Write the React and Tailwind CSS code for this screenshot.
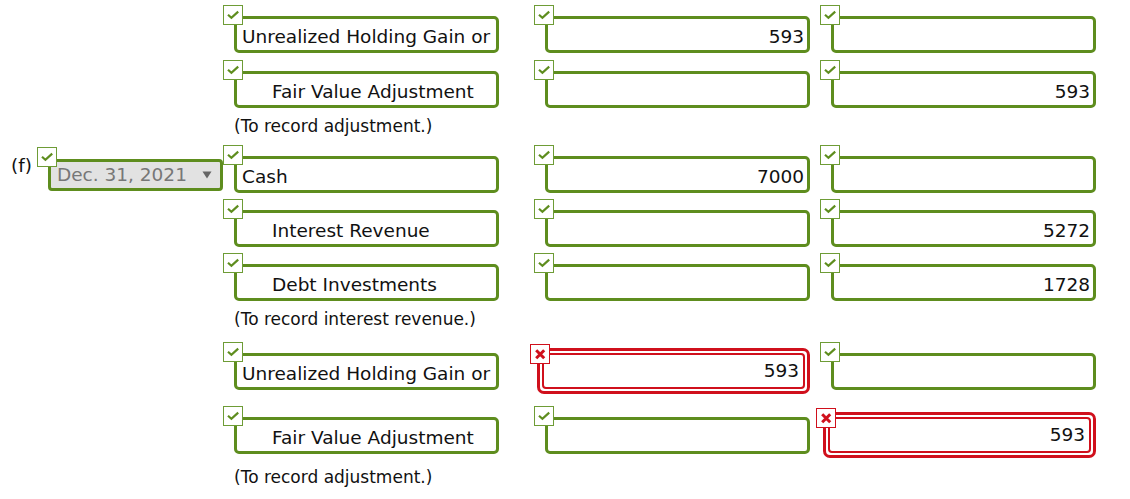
import React from "react";

// small status badges that sit on the top-left corner of each field
const Check = ({ pos = "-left-[11px] -top-[11px]" }) => (
  <span
    className={`absolute ${pos} z-10 flex h-[20px] w-[20px] items-center justify-center border border-[#6e9c36] bg-white`}
  >
    <svg width="18" height="18" viewBox="0 0 18 18">
      <path d="M4 8.8 L7.4 11.8 L14.2 5.6" fill="none" stroke="#5e8d1e" strokeWidth="2.2" />
    </svg>
  </span>
);

const Cross = () => (
  <span className="absolute -left-[7px] -top-[4px] z-10 flex h-[20px] w-[20px] items-center justify-center border border-[#d0101c] bg-white">
    <svg width="18" height="18" viewBox="0 0 18 18">
      <path d="M5.2 5.2 L13.2 13.2 M13.2 5.2 L5.2 13.2" fill="none" stroke="#d0101c" strokeWidth="3" />
    </svg>
  </span>
);

const Box = ({ children, indent = false, number = false }) => (
  <div className="relative h-[37px] w-[265px] shrink-0">
    <Check />
    <div
      className={`flex h-full items-center overflow-hidden whitespace-nowrap rounded-[5px] border-[3px] border-[#5e8d1e] bg-white pt-[5px] leading-[24px] ${
        number ? "justify-end pr-[3px]" : indent ? "pl-[35px]" : "pl-[5px]"
      }`}
    >
      {children}
    </div>
  </div>
);

const WrongBox = ({ children }) => (
  <div className="relative h-[46px] w-[273px] shrink-0">
    <Cross />
    <div className="h-full rounded-[7px] border-[3px] border-[#d0101c] bg-white p-[2px]">
      <div className="flex h-full items-center justify-end rounded-[4px] border-[2px] border-[#d0101c] pr-[4px] leading-[24px]">
        {children}
      </div>
    </div>
  </div>
);

const Row = ({ left, account, indent, debit, credit, badDebit, badCredit, className = "" }) => (
  <div className={`flex items-center ${className}`}>
    <div className="h-[37px] w-[234px] shrink-0">{left}</div>
    <Box indent={indent}>{account}</Box>
    <div className="flex w-[311px] shrink-0 justify-end">
      {badDebit ? <WrongBox>{debit}</WrongBox> : <Box number>{debit}</Box>}
    </div>
    <div className="flex w-[286px] shrink-0 justify-end">
      {badCredit ? <WrongBox>{credit}</WrongBox> : <Box number>{credit}</Box>}
    </div>
  </div>
);

const Note = ({ children, className = "" }) => (
  <div className={`pl-[234px] text-[17px] leading-[24px] ${className}`}>{children}</div>
);

const DatePick = () => (
  <div className="flex h-full items-start">
    <span className="ml-[11px] -mt-[2px] leading-[24px]">(f)</span>
    <div className="relative ml-[16px] mt-[3px] h-[32px] w-[175px]">
      <Check pos="-left-[11px] -top-[12px]" />
      <div className="flex h-full items-center justify-between rounded-[4px] border-[3px] border-[#5e8d1e] bg-[#e2e2e2] pl-[6px] pr-[8px] leading-[24px] text-[#777]">
        <span>Dec. 31, 2021</span>
        <svg width="10" height="8" viewBox="0 0 10 8">
          <path d="M0.5 0.5 L9.5 0.5 L5 7.5 Z" fill="#666" />
        </svg>
      </div>
    </div>
  </div>
);

export default function App() {
  const acct = "Unrealized Holding Gain or";

  return (
    <div className="min-h-screen w-[1130px] bg-white pt-[16px] font-['DejaVu_Sans',sans-serif] text-[18.5px] text-[#111]">
      <Row account={acct} debit="593" credit="" />
      <Row account="Fair Value Adjustment" indent debit="" credit="593" className="mt-[18px]" />
      <Note className="mt-[6px]">(To record adjustment.)</Note>

      <Row left={<DatePick />} account="Cash" debit="7000" credit="" className="mt-[18px]" />
      <Row account="Interest Revenue" indent debit="" credit="5272" className="mt-[17px]" />
      <Row account="Debt Investments" indent debit="" credit="1728" className="mt-[17px]" />
      <Note className="mt-[6px]">(To record interest revenue.)</Note>

      <Row account={acct} debit="593" credit="" badDebit className="mt-[17px]" />
      <Row account="Fair Value Adjustment" indent debit="" credit="593" badCredit className="mt-[18px]" />
      <Note className="mt-[7px]">(To record adjustment.)</Note>
    </div>
  );
}
